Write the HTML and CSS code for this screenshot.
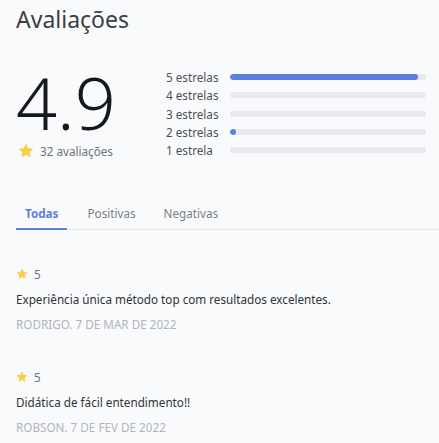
FILE: index.html
```html
<!DOCTYPE html>
<html lang="pt">
<head>
<meta charset="utf-8">
<link rel="stylesheet" href="styles.css">
</head>
<body>
<div class="page">
  <h1 class="title">Avaliações</h1>
  <div class="summary">
    <div class="score">
      <div class="big">4.9</div>
      <div class="count">
        <svg class="star" viewBox="0 0 24 24" width="16" height="16"><path d="M12 2.2l2.9 6.3 6.9.7-5.2 4.6 1.5 6.8L12 17.1l-6.1 3.5 1.5-6.8L2.2 9.2l6.9-.7z" fill="#fbcd4a" stroke="#fbcd4a" stroke-width="1.5" stroke-linejoin="round"/></svg>
        <span>32 avaliações</span>
      </div>
    </div>
    <div class="bars">
      <div class="bar-row"><span class="bar-label">5 estrelas</span><div class="track"><div class="fill" style="width:96%"></div></div></div>
      <div class="bar-row"><span class="bar-label">4 estrelas</span><div class="track"></div></div>
      <div class="bar-row"><span class="bar-label">3 estrelas</span><div class="track"></div></div>
      <div class="bar-row"><span class="bar-label">2 estrelas</span><div class="track"><div class="fill" style="width:3%"></div></div></div>
      <div class="bar-row"><span class="bar-label">1 estrela</span><div class="track"></div></div>
    </div>
  </div>
  <div class="tabs">
    <div class="tab active">Todas</div>
    <div class="tab">Positivas</div>
    <div class="tab">Negativas</div>
  </div>
  <div class="review">
    <div class="rating">
      <svg class="star-sm" viewBox="0 0 24 24" width="12" height="12"><path d="M12 2.2l2.9 6.3 6.9.7-5.2 4.6 1.5 6.8L12 17.1l-6.1 3.5 1.5-6.8L2.2 9.2l6.9-.7z" fill="#fbcd4a" stroke="#fbcd4a" stroke-width="1.5" stroke-linejoin="round"/></svg>
      <span>5</span>
    </div>
    <p class="text">Experiência única método top com resultados excelentes.</p>
    <div class="meta">RODRIGO. 7 DE MAR DE 2022</div>
  </div>
  <div class="review">
    <div class="rating">
      <svg class="star-sm" viewBox="0 0 24 24" width="12" height="12"><path d="M12 2.2l2.9 6.3 6.9.7-5.2 4.6 1.5 6.8L12 17.1l-6.1 3.5 1.5-6.8L2.2 9.2l6.9-.7z" fill="#fbcd4a" stroke="#fbcd4a" stroke-width="1.5" stroke-linejoin="round"/></svg>
      <span>5</span>
    </div>
    <p class="text">Didática de fácil entendimento!!</p>
    <div class="meta">ROBSON. 7 DE FEV DE 2022</div>
  </div>
</div>
</body>
</html>
```
FILE: styles.css
```css
html, body {
  margin: 0;
  background: #f9fafb;
}
body {
  font-family: "Noto Sans", "Open Sans", sans-serif;
  color: #2f3338;
}
.page {
  padding: 4px 0 0 16px;
}
.title {
  margin: 0;
  font-size: 23px;
  font-weight: 400;
  color: #3a3f45;
  line-height: 30px;
}
.summary {
  display: flex;
  margin-top: 34px;
}
.score {
  width: 150px;
}
.big {
  font-size: 72px;
  font-weight: 300;
  line-height: 66px;
  color: #15181c;
  margin-top: 1px;
}
.count {
  display: flex;
  align-items: center;
  gap: 6px;
  font-size: 11.7px;
  line-height: 16px;
  color: #6b7280;
  margin-top: 8px;
  margin-left: 2px;
}
.bars {
  display: flex;
  flex-direction: column;
  margin-top: 0;
}
.bar-row {
  display: flex;
  align-items: center;
  height: 18.3px;
}
.bar-label {
  width: 64px;
  font-size: 11.7px;
  color: #4b5058;
}
.track {
  width: 196px;
  height: 6px;
  border-radius: 3px;
  background: #e8e9ee;
  overflow: hidden;
}
.fill {
  height: 100%;
  border-radius: 3px;
  background: #5b7fe0;
}
.tabs {
  display: flex;
  margin-top: 40px;
  border-bottom: 1px solid #e6e8ec;
}
.tab {
  font-size: 11.7px;
  line-height: 16px;
  color: #7a7f87;
  padding: 6px 0 7px;
  margin-right: 28px;
}
.tab:first-child {
  padding-left: 9px;
  padding-right: 9px;
  margin-right: 20px;
}
.tab.active {
  color: #5b7fe0;
  font-weight: 700;
  border-bottom: 2px solid #5b7fe0;
  margin-bottom: -1px;
}
.review {
  padding-top: 36px;
  padding-bottom: 1px;
}
.rating {
  display: flex;
  align-items: center;
  gap: 6px;
  font-size: 11.7px;
  line-height: 16px;
  color: #6b7280;
}
.text {
  margin: 9px 0 0;
  font-size: 11.7px;
  line-height: 16px;
  color: #2f3338;
}
.meta {
  margin-top: 9px;
  font-size: 11.7px;
  line-height: 16px;
  color: #b0b4bb;
}
```
